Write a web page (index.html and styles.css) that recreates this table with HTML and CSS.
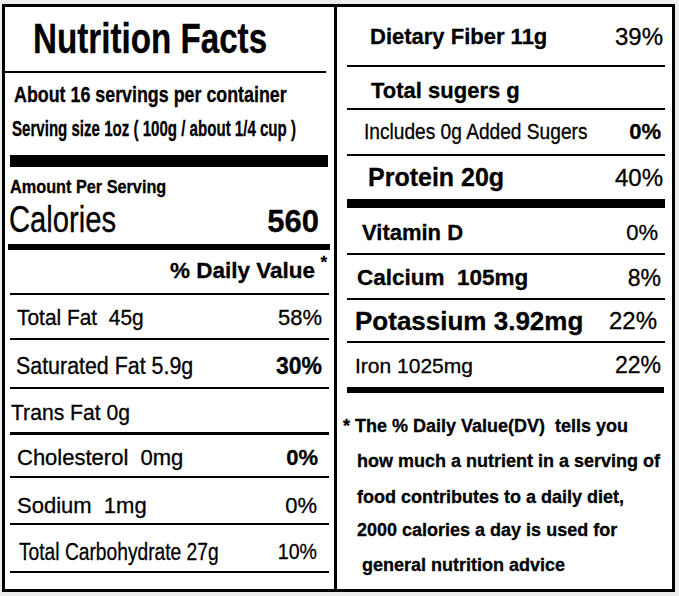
FILE: index.html
```html
<!DOCTYPE html>
<html lang="en">
<head>
<meta charset="utf-8">
<title>Nutrition Facts</title>
<link rel="stylesheet" href="styles.css">
</head>
<body>
<div class="label">
  <div class="col col-left">
    <div class="title"><span class="cond sx-title">Nutrition Facts</span></div>
    <div class="rule rule-title"></div>
    <div class="serving">
      <div class="servings-per"><span class="cond sx-about">About 16 servings per container</span></div>
      <div class="serving-size"><span class="cond sx-size">Serving size 1oz ( 100g / about 1/4 cup )</span></div>
    </div>
    <div class="rule rule-bar12"></div>
    <div class="amount">
      <div class="amount-head"><span class="cond sx-amount">Amount Per Serving</span></div>
      <div class="calories">
        <span class="cond sx-cal">Calories</span>
        <span class="cal-value">560</span>
      </div>
    </div>
    <div class="rule rule-bar6"></div>
    <div class="row row-dv"><span></span><span class="dv">% Daily Value<sup class="star">*</sup></span></div>
    <div class="rule rule-l"></div>
    <div class="row row-fat"><span class="cond sx-95">Total Fat&nbsp; 45g</span><span class="pct">58%</span></div>
    <div class="rule rule-l"></div>
    <div class="row row-sat"><span class="cond sx-93 fs23">Saturated Fat 5.9g</span><span class="pct b fs23">30%</span></div>
    <div class="rule rule-l"></div>
    <div class="row row-trans"><span class="cond sx-96">Trans Fat 0g</span></div>
    <div class="rule rule-l rule-3"></div>
    <div class="row row-chol"><span>Cholesterol&nbsp; 0mg</span><span class="pct b">0%</span></div>
    <div class="rule rule-l"></div>
    <div class="row row-sod"><span>Sodium&nbsp; 1mg</span><span class="pct">0%</span></div>
    <div class="rule rule-l"></div>
    <div class="row row-carb"><span class="cond sx-carb fs23">Total Carbohydrate 27g</span><span class="pct pct-cond">10%</span></div>
    <div class="rule rule-l rule-last"></div>
  </div>
  <div class="col col-right">
    <div class="row row-fiber"><span class="b">Dietary Fiber 11g</span><span class="pct fs24">39%</span></div>
    <div class="rule rule-r"></div>
    <div class="row row-sugar"><span class="b">Total sugers g</span></div>
    <div class="rule rule-r"></div>
    <div class="row row-incl"><span class="cond sx-incl">Includes 0g Added Sugers</span><span class="pct b">0%</span></div>
    <div class="rule rule-r"></div>
    <div class="row row-prot"><span class="b fs25">Protein 20g</span><span class="pct fs24">40%</span></div>
    <div class="rule rule-r rule-bar9"></div>
    <div class="row row-vit"><span class="b">Vitamin D</span><span class="pct">0%</span></div>
    <div class="rule rule-r"></div>
    <div class="row row-calc"><span class="b fs225">Calcium&nbsp; 105mg</span><span class="pct fs23">8%</span></div>
    <div class="rule rule-r"></div>
    <div class="row row-pot"><span class="b fs26">Potassium 3.92mg</span><span class="pct fs24">22%</span></div>
    <div class="rule rule-r"></div>
    <div class="row row-iron"><span class="fs21">Iron 1025mg</span><span class="pct fs23">22%</span></div>
    <div class="rule rule-r rule-bar6r"></div>
    <div class="footnote">
      <p class="fn fn-1">* The % Daily Value(DV)&nbsp; tells you</p>
      <p class="fn fn-2">how much a nutrient in a serving of</p>
      <p class="fn fn-3">food contributes to a daily diet,</p>
      <p class="fn fn-4">2000 calories a day is used for</p>
      <p class="fn fn-5">general nutrition advice</p>
    </div>
  </div>
</div>
</body>
</html>
```
FILE: styles.css
```css
*, *::before, *::after {
  box-sizing: border-box;
}
html, body {
  margin: 0;
  padding: 0;
}
body {
  background: #ededed;
  width: 679px;
  height: 596px;
  overflow: hidden;
  font-family: "Liberation Sans", Arial, sans-serif;
  color: #000;
  -webkit-text-stroke: 0.3px #000;
}
.label {
  margin: 4px 0 0 2px;
  width: 673px;
  height: 588px;
  border: 3px solid #000;
  background: #fff;
  display: flex;
}
.col {
  display: flex;
  flex-direction: column;
}
.col-left {
  width: 332px;
  border-right: 3px solid #000;
}
.col-right {
  flex: 1;
  min-width: 0;
}

/* rules */
.rule {
  background: #000;
  height: 2px;
  flex: none;
}
.rule-title { margin-right: 8px; }
.rule-bar12 { height: 12px; margin: 0 6px 0 5px; }
.rule-bar6 { height: 6px; margin: 0 4px 0 3px; }
.rule-l { margin: 0 5px 0 5px; }
.rule-3 { height: 3px; }
.rule-r { margin: 0 7px 0 10px; }
.rule-bar9 { height: 9px; }
.rule-bar6r { height: 6px; margin-right: 8px; }

/* condensed text */
.cond {
  display: inline-block;
  white-space: nowrap;
  transform-origin: left center;
  transform: scaleX(var(--sx, 1));
}
.sx-title { --sx: .79; }
.sx-about { --sx: .83; }
.sx-size { --sx: .67; }
.sx-amount { --sx: .87; }
.sx-cal { --sx: .79; }
.sx-95 { --sx: .95; }
.sx-93 { --sx: .93; }
.sx-96 { --sx: .96; }
.sx-carb { --sx: .835; }
.sx-incl { --sx: .87; }

.b { font-weight: 700; }
.fs21 { font-size: 21px; }
.fs225 { font-size: 22.5px; }
.fs23 { font-size: 23px; }
.fs24 { font-size: 24px; }
.fs25 { font-size: 25px; }
.fs26 { font-size: 26px; }

/* title */
.title {
  height: 64px;
  display: flex;
  align-items: center;
  padding-left: 28px;
  font-size: 42px;
  font-weight: 700;
  line-height: 1;
  flex: none;
}
.serving {
  height: 82px;
  padding-left: 9px;
  display: flex;
  flex-direction: column;
  flex: none;
}
.servings-per {
  font-size: 21.5px;
  font-weight: 700;
  line-height: 24px;
  margin-top: 10px;
}
.serving-size {
  font-size: 22.5px;
  font-weight: 700;
  line-height: 26px;
  margin-top: 9px;
  margin-left: -2px;
}
.amount {
  height: 77px;
  padding: 0 10px 0 4px;
  flex: none;
}
.amount-head {
  font-size: 18.7px;
  font-weight: 700;
  line-height: 20px;
  margin-top: 10px;
  margin-left: 1px;
}
.calories {
  display: flex;
  justify-content: space-between;
  align-items: baseline;
  font-size: 37px;
  line-height: 40px;
  margin-top: 3px;
}
.cal-value {
  font-weight: 700;
  font-size: 31px;
  margin-right: 5px;
}

/* rows */
.row {
  display: flex;
  justify-content: space-between;
  align-items: center;
  font-size: 22px;
  line-height: 1;
  white-space: nowrap;
  flex: none;
}
.col-left .row { padding: 0 12px 0 12px; }
.col-right .row { padding: 0 12px 0 33px; }
.pct { text-align: right; }
.pct-cond {
  display: inline-block;
  transform: scaleX(.89);
  transform-origin: right center;
}
.row-dv { height: 43px; padding-right: 7px !important; }
.dv {
  font-weight: 700;
  font-size: 22.5px;
  position: relative;
  padding-right: 12px;
}
.star {
  position: absolute;
  right: 0;
  top: -6px;
  font-size: 17px;
  vertical-align: baseline;
}
.row-fat { height: 43px; padding-top: 3px !important; }
.row-sat { height: 47px; padding-top: 5px !important; padding-left: 11px !important; }
.row-trans { height: 43px; padding-top: 4px !important; padding-left: 6px !important; }
.row-chol { height: 41px; padding-top: 4px !important; padding-right: 16px !important; }
.row-sod { height: 45px; padding-top: 10px !important; padding-right: 17px !important; }
.row-carb { height: 46px; padding-top: 8px !important; padding-left: 14px !important; padding-right: 17px !important; }

.row-fiber { height: 58px; padding-top: 1px !important; padding-right: 9px !important; }
.row-sugar { height: 41px; padding-top: 6px !important; padding-left: 34px !important; }
.row-incl { height: 44px; padding-left: 27px !important; padding-right: 11px !important; }
.row-prot { height: 43px; padding-left: 31px !important; padding-right: 9px !important; }
.row-vit { height: 45px; padding-top: 5px !important; padding-left: 25px !important; padding-right: 14px !important; }
.row-calc { height: 43px; padding-top: 3px !important; padding-left: 20px !important; padding-right: 11px !important; }
.row-pot { height: 41px; padding-left: 18px !important; padding-right: 15px !important; }
.row-iron { height: 44px; padding-left: 18px !important; padding-right: 11px !important; }

/* footnote */
.footnote {
  flex: 1;
  font-size: 18px;
  font-weight: 700;
  line-height: 20px;
}
.fn {
  margin: 0;
  white-space: nowrap;
}
.fn-1 { margin-top: 23px; padding-left: 6px; }
.fn-2 { margin-top: 15px; padding-left: 20px; }
.fn-3 { margin-top: 16px; padding-left: 20px; }
.fn-4 { margin-top: 13px; padding-left: 20px; }
.fn-5 { margin-top: 15px; padding-left: 25px; }
```
